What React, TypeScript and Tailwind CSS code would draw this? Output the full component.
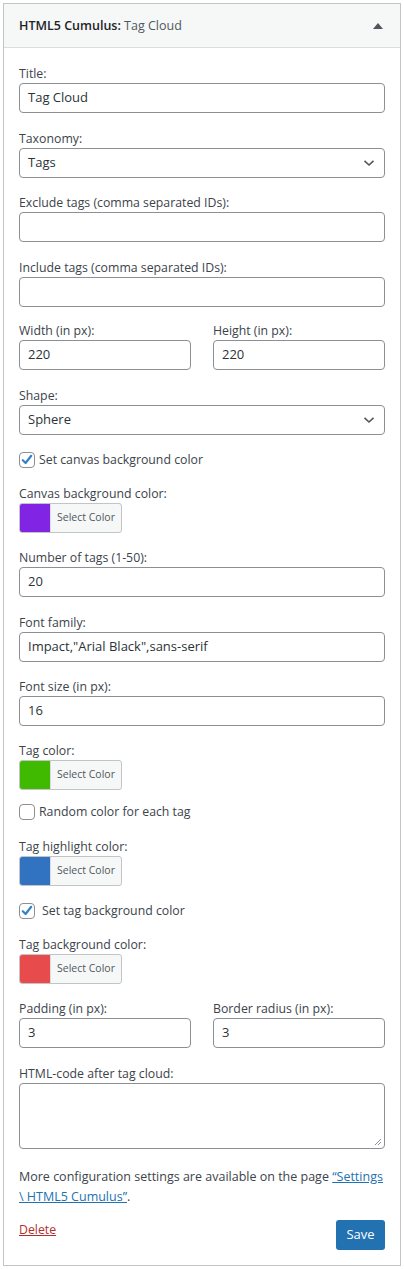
import React from "react";

const font = { fontFamily: '"Open Sans", "Noto Sans", sans-serif' };

function Label({ children }: { children: React.ReactNode }) {
  return <div className="h-[18px] leading-[18px] text-[12.3px] text-[#3c434a]">{children}</div>;
}

function TextInput({ value = "" }: { value?: string }) {
  return (
    <div className="h-[30px] w-full rounded-[4px] border border-[#8c8f94] bg-white px-[8px] flex items-center text-[13px] text-[#2c3338]">
      {value}
    </div>
  );
}

function Select({ value }: { value: string }) {
  return (
    <div className="h-[30px] w-full rounded-[4px] border border-[#8c8f94] bg-white pl-[8px] pr-[8px] flex items-center justify-between text-[13px] text-[#2c3338]">
      <span>{value}</span>
      <svg width="12" height="8" viewBox="0 0 12 8" className="mr-[1px]">
        <path d="M1.5 1.8 L6 6 L10.5 1.8" fill="none" stroke="#50575e" strokeWidth="1.6" />
      </svg>
    </div>
  );
}

function Checkbox({ checked, label, gap = "ml-[4px]" }: { checked: boolean; label: string; gap?: string }) {
  return (
    <div className="h-[16px] flex items-center">
      <div className="w-[16px] h-[16px] rounded-[4px] border border-[#8c8f94] bg-white flex items-center justify-center shrink-0">
        {checked && (
          <svg width="14" height="14" viewBox="0 0 14 14">
            <path d="M2.8 7.2 L5.6 10 L11.2 2.8" fill="none" stroke="#3582c4" strokeWidth="2.2" strokeLinecap="round" strokeLinejoin="round" />
          </svg>
        )}
      </div>
      <span className={`${gap} text-[12.3px] text-[#3c434a] leading-[18px]`}>{label}</span>
    </div>
  );
}

function ColorButton({ color }: { color: string }) {
  return (
    <div className="h-[30px] w-[103px] flex rounded-[3px] border border-[#c3c4c7] overflow-hidden bg-[#f6f7f7]">
      <div className="w-[30px] h-full" style={{ backgroundColor: color }} />
      <div className="flex-1 flex items-center justify-center text-[10.5px] text-[#50575e] border-l border-[#dcdcde]">Select Color</div>
    </div>
  );
}

export default function App() {
  return (
    <div className="bg-white w-[404px] h-[1269px] pt-[3px] px-[3px]" style={font}>
      <div className="w-[398px] border border-[#c3c4c7] bg-white">
        <div className="h-[44px] bg-[#f6f7f7] border-b border-[#dcdcde] flex items-center justify-between pl-[15px] pr-[17px]">
          <div className="text-[12.5px] text-[#1d2327] pt-[1px]">
            <span className="font-semibold">HTML5 Cumulus:</span>
            <span className="text-[#50575e]"> Tag Cloud</span>
          </div>
          <svg width="10" height="6" viewBox="0 0 10 6">
            <path d="M5 0 L10 6 L0 6 Z" fill="#50575e" />
          </svg>
        </div>

        <div className="px-[15px] pt-[17px] pb-[15px] flex flex-col">
          <div className="mb-[17px]"><Label>Title:</Label><TextInput value="Tag Cloud" /></div>
          <div className="mb-[16px]"><Label>Taxonomy:</Label><Select value="Tags" /></div>
          <div className="mb-[17px]"><Label>Exclude tags (comma separated IDs):</Label><TextInput /></div>
          <div className="mb-[15px]"><Label>Include tags (comma separated IDs):</Label><TextInput /></div>
          <div className="mb-[17px] flex gap-[22px]">
            <div className="flex-1"><Label>Width (in px):</Label><TextInput value="220" /></div>
            <div className="flex-1"><Label>Height (in px):</Label><TextInput value="220" /></div>
          </div>
          <div className="mb-[17px]"><Label>Shape:</Label><Select value="Sphere" /></div>
          <div className="mb-[17px]"><Checkbox checked label="Set canvas background color" /></div>
          <div className="mb-[16px]"><Label>Canvas background color:</Label><ColorButton color="#8224e3" /></div>
          <div className="mb-[17px]"><Label>Number of tags (1-50):</Label><TextInput value="20" /></div>
          <div className="mb-[16px]"><Label>Font family:</Label><TextInput value={'Impact,"Arial Black",sans-serif'} /></div>
          <div className="mb-[16px]"><Label>Font size (in px):</Label><TextInput value="16" /></div>
          <div className="mb-[14px]"><Label>Tag color:</Label><ColorButton color="#3fba00" /></div>
          <div className="mb-[18px]"><Checkbox checked={false} label="Random color for each tag" /></div>
          <div className="mb-[17px]"><Label>Tag highlight color:</Label><ColorButton color="#3173c1" /></div>
          <div className="mb-[17px]"><Checkbox checked label="Set tag background color" gap="ml-[7px]" /></div>
          <div className="mb-[16px]"><Label>Tag background color:</Label><ColorButton color="#e84b4b" /></div>
          <div className="mb-[17px] flex gap-[22px]">
            <div className="flex-1"><Label>Padding (in px):</Label><TextInput value="3" /></div>
            <div className="flex-1"><Label>Border radius (in px):</Label><TextInput value="3" /></div>
          </div>
          <div className="mb-[18px]">
            <Label>HTML-code after tag cloud:</Label>
            <div className="relative h-[66px] w-full rounded-[4px] border border-[#8c8f94] bg-white">
              <svg width="8" height="8" viewBox="0 0 8 8" className="absolute right-[2px] bottom-[2px]">
                <path d="M7 1 L1 7 M7 4 L4 7" stroke="#8c8f94" strokeWidth="1" />
              </svg>
            </div>
          </div>
          <p className="text-[12.5px] leading-[20px] text-[#3c434a] mb-[13px]">
            More configuration settings are available on the page{" "}
            <a className="text-[#2271b1] underline">“Settings</a>
            <br />
            <a className="text-[#2271b1] underline">{"\\ HTML5 Cumulus”"}</a>.
          </p>
          <div className="flex justify-between items-start">
            <a className="text-[12.3px] text-[#b32d2e] underline mt-[1px] leading-[18px]">Delete</a>
            <div className="h-[30px] w-[49px] rounded-[3px] bg-[#2271b1] text-white text-[13px] flex items-center justify-center">Save</div>
          </div>
        </div>
      </div>
    </div>
  );
}
